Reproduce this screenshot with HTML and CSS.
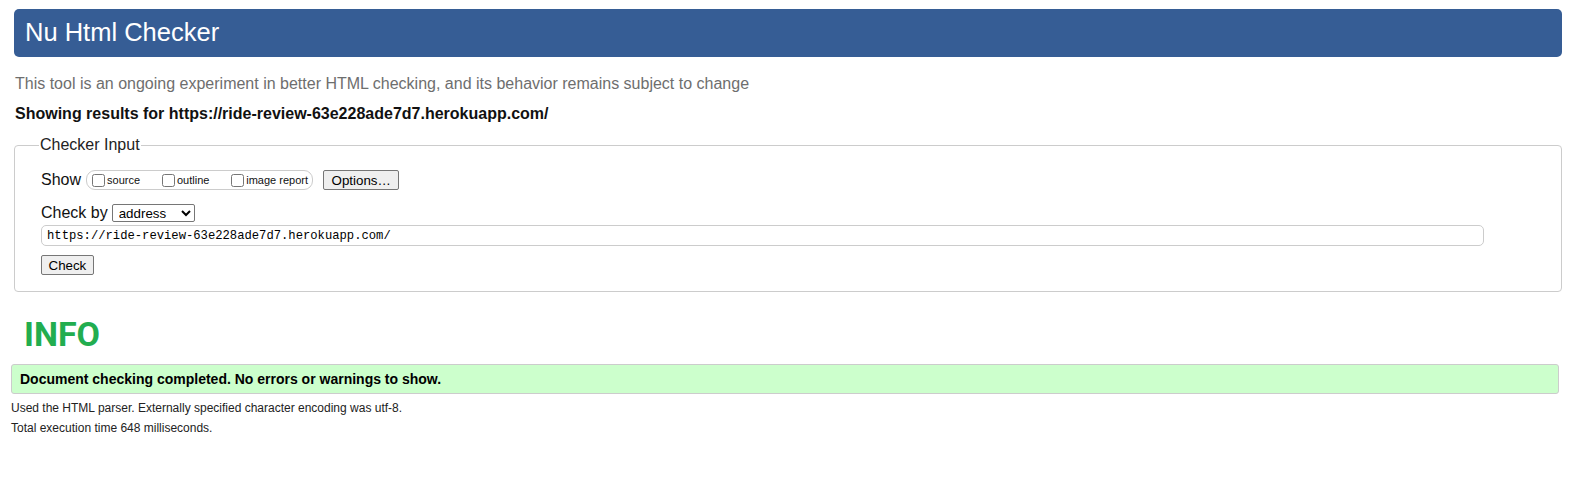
FILE: index.html
```html
<!DOCTYPE html>
<html>
<head>
<meta charset="utf-8">
<title>Nu Html Checker</title>
<link rel="stylesheet" href="styles.css">
</head>
<body>
<h1 class="hdr">Nu Html Checker</h1>
<p class="intro">This tool is an ongoing experiment in better HTML checking, and its behavior remains subject to change</p>
<p class="showing">Showing results for https://ride-review-63e228ade7d7.herokuapp.com/</p>
<fieldset class="input">
  <legend>Checker Input</legend>
  <div class="row show-row">
    <span class="lbl">Show</span>
    <span class="opts">
      <label class="opt"><input type="checkbox">source</label>
      <label class="opt"><input type="checkbox">outline</label>
      <label class="opt"><input type="checkbox">image report</label>
    </span>
    <button class="btn">Options…</button>
  </div>
  <div class="row by-row">
    <span class="lbl">Check by</span>
    <select class="sel"><option>address</option></select>
  </div>
  <input class="url" type="text" value="https://ride-review-63e228ade7d7.herokuapp.com/">
  <div class="row"><button class="btn check">Check</button></div>
</fieldset>
<h2 class="info">INFO</h2>
<div class="success">Document checking completed. No errors or warnings to show.</div>
<p class="small first">Used the HTML parser. Externally specified character encoding was utf-8.</p>
<p class="small">Total execution time 648 milliseconds.</p>
</body>
</html>
```

FILE: styles.css
```css
* { box-sizing: border-box; }
body {
  margin: 0;
  padding: 9px 12px 0 0;
  font-family: "Liberation Sans", Arial, sans-serif;
  color: #111;
  background: #fff;
}
.hdr {
  margin: 0 0 0 14px;
  height: 48px;
  background: #365d95;
  color: #fff;
  border-radius: 5px;
  font-weight: normal;
  font-size: 25.5px;
  line-height: 47px;
  padding: 0 11px;
}
.intro {
  margin: 17px 0 0 15px;
  font-size: 16px;
  line-height: 20px;
  color: #6e6e6e;
}
.showing {
  margin: 10px 0 0 15px;
  font-size: 16px;
  line-height: 20px;
  font-weight: bold;
}
.input {
  margin: 12px 0 0 14px;
  border: 1px solid #ccc;
  border-radius: 4px;
  padding: 12px 77px 16px 26px;
  min-width: 0;
}
.input legend {
  font-size: 16px;
  color: #222;
  padding: 0 1px;
  margin-left: -2px;
}
.row {
  display: flex;
  align-items: center;
}
.lbl {
  font-size: 16px;
  line-height: 20px;
}
.show-row { height: 20px; margin-top: 4px; }
.opts {
  display: flex;
  align-items: center;
  margin-left: 5px;
  height: 20px;
  border: 1px solid #ccc;
  border-radius: 9px;
  padding: 0 4px 0 2px;
  width: 227px;
  justify-content: space-between;
}
.opt {
  display: flex;
  align-items: center;
  font-size: 11px;
}
.opt input { margin: 0 2px 0 3px; width: 13px; height: 13px; }
.btn {
  font-family: "Liberation Sans", Arial, sans-serif;
  font-size: 13.33px;
  height: 20px;
  padding: 0 7.5px;
  background: #efefef;
  border: 1px solid #767676;
  border-radius: 2px;
  color: #000;
}
.show-row .btn { margin-left: 10px; }
.by-row { margin-top: 14px; height: 18px; }
.sel {
  margin-left: 4px;
  height: 18px;
  width: 83px;
  font-family: "Liberation Sans", Arial, sans-serif;
  font-size: 13.33px;
  border: 1px solid #767676;
  border-radius: 2px;
  background: #fff;
  padding: 0 0 0 2px;
}
.url {
  display: block;
  width: 100%;
  margin-top: 3px;
  height: 21px;
  border: 1px solid #ccc;
  border-radius: 5px;
  font-family: "Liberation Mono", "DejaVu Sans Mono", monospace;
  font-size: 12.2px;
  padding: 0 5px;
  color: #000;
}
.check { margin-top: 9px; height: 20px; padding: 0 6.5px; }
.info {
  margin: 22px 0 0 24px;
  font-family: Roboto, "Liberation Sans", sans-serif;
  font-weight: bold;
  font-size: 34px;
  line-height: 40px;
  color: #22ad4f;
}
.success {
  margin: 10px 3px 0 11px;
  height: 30px;
  background: #ccffcc;
  border: 1px solid #ccc;
  border-radius: 3px;
  padding: 0 8px;
  font-size: 14px;
  font-weight: bold;
  line-height: 28px;
  color: #000;
}
.small {
  margin: 0 0 0 11px;
  font-size: 12px;
  line-height: 20px;
  color: #222;
}
.small.first { margin-top: 4px; }
```
